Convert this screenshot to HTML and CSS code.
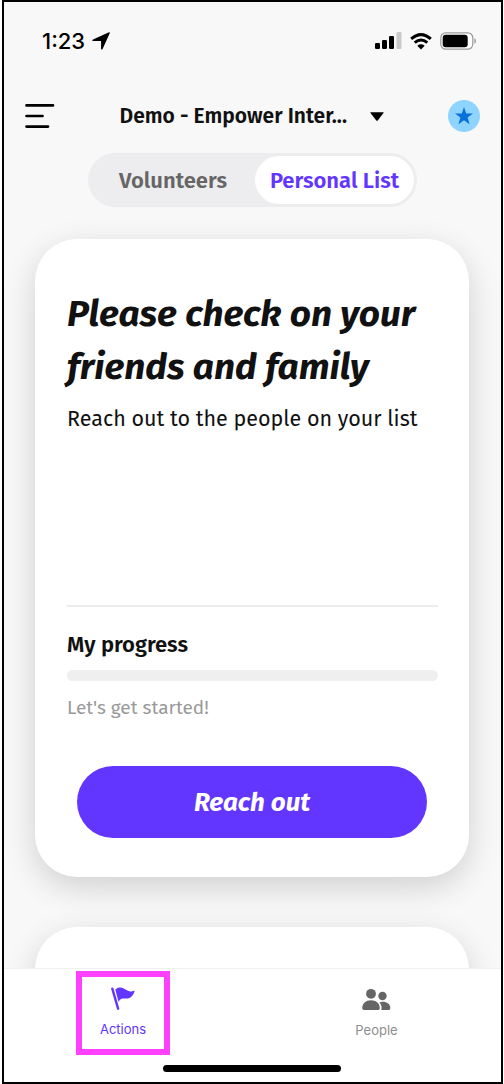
FILE: index.html
```html
<!DOCTYPE html>
<html lang="en">
<head>
<meta charset="utf-8">
<title>Actions</title>
<link rel="stylesheet" href="styles.css">
</head>
<body>
<div class="phone">
  <div class="status">
    <div class="clock"><span>1:23</span>
      <svg class="location" viewBox="0 0 18 18"><path d="M17 .3c.6-.3 1 .2.7.9L10.6 17c-.4.9-1.5.8-1.5-.3V9H1.3C.2 9 0 7.900 1 7.400z"/></svg>
    </div>
    <div class="indicators">
      <svg width="27" height="18" viewBox="0 0 27 18"><rect x="0" y="11" width="5" height="6" rx="1.300"/><rect x="7" y="8" width="5" height="9" rx="1.300"/><rect x="14" y="4" width="5" height="13" rx="1.300"/><rect x="21.500" y="0" width="5" height="17" rx="1.300" fill="#c9c9c9"/></svg>
      <svg width="22" height="17" viewBox="0 0 22 17"><g fill="none" stroke="#000" stroke-width="3"><path d="M1.200 5.900Q11-2.700 20.800 5.900"/><path d="M4.700 9.700Q11 4.300 17.300 9.700"/></g><path d="M7.300 12.700Q11 9.900 14.700 12.700L11 16.500z"/></svg>
      <svg width="36" height="18" viewBox="0 0 36 18"><rect x=".8" y=".8" width="32" height="16.400" rx="5" fill="#fff" stroke="#999" stroke-width="1.200"/><rect x="2.700" y="2.800" width="25" height="12.400" rx="3"/><path d="M34.400 6v6q1.600-1 1.600-3t-1.600-3z" fill="#999"/></svg>
    </div>
  </div>

  <header class="header">
    <svg class="menu" viewBox="0 0 30 26"><path d="M1.500 2.400h26.500M1.500 13h16M1.500 23.600h21.500"/></svg>
    <div class="campaign"><span class="campaign-name">Demo - Empower Inter...</span><svg width="14" height="9" viewBox="0 0 14 9"><path d="M.8.300h12.400q.8 0 .3.800L7.700 8.400q-.7.800-1.400 0L.5 1.100Q0 .300.800.300z"/></svg></div>
    <div class="avatar"><svg width="18" height="18" viewBox="0 0 18 18"><path d="M9 0l2.200 6.400H18l-5.400 4.100 2 6.800L9 13.300l-5.600 4 2-6.800L0 6.400h6.800z"/></svg></div>
  </header>

  <nav class="toggle">
    <div class="option"><span class="volunteers">Volunteers</span></div>
    <div class="option selected"><span class="personal">Personal List</span></div>
  </nav>

  <main class="feed">
    <section class="card">
      <h1 class="title"><span class="title-first">Please check on your</span><br><span class="title-second">friends and family</span></h1>
      <p class="description">Reach out to the people on your list</p>
      <div class="progress">
        <h2 class="progress-title">My progress</h2>
        <div class="track"></div>
        <p class="hint">Let's get started!</p>
      </div>
      <div class="button"><span>Reach out</span></div>
    </section>
    <section class="card"></section>
  </main>

  <footer class="tabbar">
    <div class="tabs">
      <div class="tab actions">
        <svg width="24" height="23" viewBox="0 0 24 23"><path d="M1.300 1.700l5.800 20" fill="none" stroke="#6236ff" stroke-width="2.400" stroke-linecap="round"/><path d="M4.300 2.600C8.300-1.800 13 1.500 16 3.200c3 1.600 5.300 1.500 7.800.4-1.200 4.200-3.300 7.100-6.600 7.800-3.600.8-6.400-1.900-9.700 3.300z" fill="#6236ff"/></svg>
        <span>Actions</span>
      </div>
      <div class="tab people">
        <svg width="29" height="23" viewBox="0 0 29 23" fill="#666"><circle cx="9" cy="5.800" r="4.900"/><circle cx="20.500" cy="8" r="4.200"/><path d="M.3 20c0-4.700 3.500-7.800 8.700-7.800s8.800 3.100 8.800 7.800c0 1.300-.5 2-1.700 2H2C.8 22 .3 21.300.3 20zM17.400 14.400q1.200-.6 3.100-.6c4.600 0 7.800 2.400 7.800 6.300 0 1.300-.5 1.900-1.700 1.900h-7.300c.8-3-.1-5.800-1.900-7.600z"/></svg>
        <span>People</span>
      </div>
    </div>
    <div class="home"></div>
  </footer>
</div>
</body>
</html>
```

FILE: styles.css
```css
* { box-sizing: border-box; }

body {
  margin: 0;
  background: #fff;
  font-family: "Fira Sans", "Noto Sans", sans-serif;
  color: #111;
}

h1, h2, p { margin: 0; }
svg { display: block; flex: none; }
span { white-space: nowrap; }

.phone {
  display: flex;
  flex-direction: column;
  width: 501px;
  height: 1084px;
  margin-left: 2px;
  border: 2px solid #000;
  background: #f8f8f8;
  overflow: hidden;
}

.status {
  display: flex;
  flex: none;
  justify-content: space-between;
  align-items: center;
  height: 78px;
  padding: 0 25px 0 38px;
}

.clock {
  display: flex;
  align-items: center;
  gap: 7px;
  font: 500 22px/30px Inter, sans-serif;
  color: #000;
}

.location { width: 18px; height: 18px; }
.indicators { display: flex; align-items: center; gap: 8px; }

.header {
  display: flex;
  flex: none;
  align-items: center;
  justify-content: space-between;
  height: 72px;
  padding: 0 21px;
}

.menu {
  width: 30px;
  height: 26px;
  fill: none;
  stroke: #000;
  stroke-width: 2.700;
  stroke-linecap: round;
}

.campaign { display: flex; align-items: center; gap: 9px; }
.campaign-name { width: 241px; font-size: 21px; font-weight: 600; line-height: 30px; }

.avatar {
  display: grid;
  place-items: center;
  width: 32px;
  height: 32px;
  border-radius: 50%;
  background: #8fd3ff;
  fill: #0670dc;
}

.toggle {
  display: grid;
  flex: none;
  grid-template-columns: 164px 159px;
  width: 329px;
  height: 54px;
  margin: 1px 0 0 84px;
  padding: 3px;
  border-radius: 27px;
  background: #ededef;
  font-size: 22px;
  font-weight: 600;
  color: #666;
}

.option { display: grid; place-items: center; border-radius: 24px; }
.selected { background: #fff; color: #6236ff; }

.feed {
  display: flex;
  flex: 1;
  flex-direction: column;
  gap: 50px;
  min-height: 0;
  padding: 32px 32px 0 31px;
  overflow: hidden;
}

.card {
  flex: none;
  height: 638px;
  padding: 48px 31px 0 32px;
  border-radius: 42px;
  background: #fff;
  box-shadow: 0 10px 32px rgba(0, 0, 0, .16);
}

.title { font-size: 37px; font-style: italic; font-weight: 700; line-height: 53px; }
.description { margin-top: 11px; font-size: 21.500px; line-height: 30px; }

.progress { margin-top: 171px; padding-top: 23px; border-top: 2px solid #ececec; }
.progress-title { font-size: 22px; font-weight: 600; line-height: 30px; }
.track { height: 11px; margin-top: 10px; border-radius: 6px; background: #efefef; }
.hint { margin-top: 13px; font-size: 19px; line-height: 28px; color: #999; }

.button {
  display: grid;
  place-items: center;
  height: 72px;
  margin: 44px 11px 0 10px;
  border-radius: 36px;
  background: #6236ff;
  color: #fff;
  font-size: 26px;
  font-style: italic;
  font-weight: 700;
}

.tabbar {
  flex: none;
  height: 114px;
  border-top: 1px solid #efefef;
  background: #fff;
}

.tabs { display: flex; justify-content: space-between; height: 96px; padding: 2px 76px 0 72px; }
.tab {
  display: flex;
  flex-direction: column;
  align-items: center;
  padding-top: 17px;
  font: 400 13px/20px Inter, sans-serif;
}
.tab span { margin-top: 9px; }
.actions { width: 94px; height: 84px; padding-top: 10px; border: 6px solid #ff40ff; color: #6236ff; }
.people { width: 97px; padding-top: 17px; color: #8e8e8e; }

.home { width: 178px; height: 7px; margin-left: 159px; border-radius: 4px; background: #000; }
```
